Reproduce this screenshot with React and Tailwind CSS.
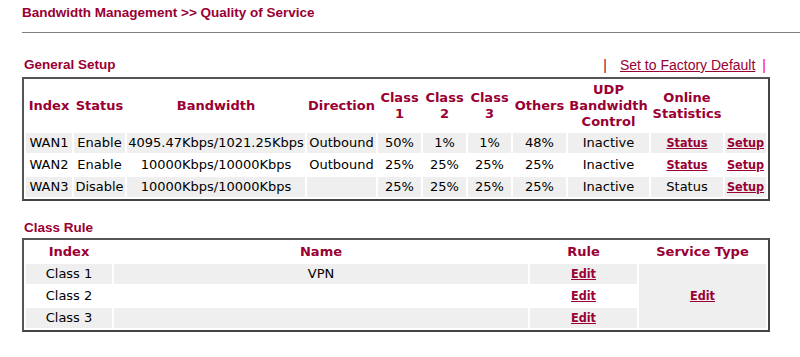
const wanRows = [
  { idx: "WAN1", status: "Enable", bw: "4095.47Kbps/1021.25Kbps", dir: "Outbound", c1: "50%", c2: "1%", c3: "1%", others: "48%", udp: "Inactive", link: true },
  { idx: "WAN2", status: "Enable", bw: "10000Kbps/10000Kbps", dir: "Outbound", c1: "25%", c2: "25%", c3: "25%", others: "25%", udp: "Inactive", link: true },
  { idx: "WAN3", status: "Disable", bw: "10000Kbps/10000Kbps", dir: "", c1: "25%", c2: "25%", c3: "25%", others: "25%", udp: "Inactive", link: false },
];

const classRows = [
  { idx: "Class 1", name: "VPN" },
  { idx: "Class 2", name: "" },
  { idx: "Class 3", name: "" },
];

function Head({ children }) {
  return (
    <div className="h-[50px] flex items-center justify-center text-center font-bold leading-[16px] text-[#990033]">
      {children}
    </div>
  );
}

function Cell({ gray, children }) {
  return (
    <div className={`h-[20px] flex items-center justify-center leading-[20px] whitespace-nowrap ${gray ? "bg-[#efefef]" : ""}`}>
      {children}
    </div>
  );
}

// links use a narrower bold face than the headers
function Lnk({ children }) {
  return (
    <a href="#" className="font-bold underline text-[#990033] text-[12.5px] font-['DejaVu_Sans_Condensed','Liberation_Sans',sans-serif]">
      {children}
    </a>
  );
}

export default function App() {
  return (
    <div className="w-[800px] h-[357px] bg-white overflow-hidden font-['Liberation_Sans',Arial,sans-serif]">
      <div className="pl-[22px]">
        {/* page title */}
        <h1 className="pt-[5px] text-[13.5px] font-bold leading-[16px] text-[#990033]">
          Bandwidth Management &gt;&gt; Quality of Service
        </h1>
        <div className="mt-[11px] h-[1px] bg-[#808080]" />

        {/* general setup */}
        <div className="w-[748px] mt-[24px] flex items-end justify-between leading-[16px]">
          <span className="pl-[2px] text-[13.5px] font-bold text-[#990033]">General Setup</span>
          <span className="flex items-center pr-[4px] text-[14px]">
            <span className="text-[#990033]">|</span>
            <a href="#" className="ml-[13px] mr-[7px] underline text-[#990033]">Set to Factory Default</a>
            <span className="text-[#ff0066]">|</span>
          </span>
        </div>
        <div className="mt-[4px] w-[748px] border-2 border-t-[#555] border-l-[#555] border-r-[#444] border-b-[#444] p-[2px] grid grid-cols-[46px_51px_178px_69px_43px_43px_43px_53px_81px_72px_41px] gap-[2px] text-[13px] text-black font-['DejaVu_Sans',Verdana,sans-serif]">
          <Head>Index</Head>
          <Head>Status</Head>
          <Head>Bandwidth</Head>
          <Head>Direction</Head>
          <Head>Class<br />1</Head>
          <Head>Class<br />2</Head>
          <Head>Class<br />3</Head>
          <Head>Others</Head>
          <Head>UDP<br />Bandwidth<br />Control</Head>
          <Head>Online<br />Statistics</Head>
          <Head></Head>
          {wanRows.map((r, i) => {
            const g = i !== 1;
            return [
              <Cell key={r.idx + "a"} gray={g}>{r.idx}</Cell>,
              <Cell key={r.idx + "b"} gray={g}>{r.status}</Cell>,
              <Cell key={r.idx + "c"} gray={g}>{r.bw}</Cell>,
              <Cell key={r.idx + "d"} gray={g}>{r.dir}</Cell>,
              <Cell key={r.idx + "e"} gray={g}>{r.c1}</Cell>,
              <Cell key={r.idx + "f"} gray={g}>{r.c2}</Cell>,
              <Cell key={r.idx + "g"} gray={g}>{r.c3}</Cell>,
              <Cell key={r.idx + "h"} gray={g}>{r.others}</Cell>,
              <Cell key={r.idx + "i"} gray={g}>{r.udp}</Cell>,
              <Cell key={r.idx + "j"} gray={g}>{r.link ? <Lnk>Status</Lnk> : "Status"}</Cell>,
              <Cell key={r.idx + "k"} gray={g}><Lnk>Setup</Lnk></Cell>,
            ];
          })}
        </div>

        {/* class rule */}
        <div className="mt-[19px] pl-[2px] text-[13.5px] leading-[16px] font-bold text-[#990033]">Class Rule</div>
        <div className="mt-[2px] w-[748px] border-2 border-t-[#555] border-l-[#555] border-r-[#444] border-b-[#444] p-[2px] grid grid-cols-[86px_414px_107px_127px] gap-[2px] text-[13px] text-black font-['DejaVu_Sans',Verdana,sans-serif]">
          {["Index", "Name", "Rule", "Service Type"].map((h) => (
            <div key={h} className="h-[20px] flex items-center justify-center font-bold text-[#990033]">{h}</div>
          ))}
          {classRows.map((r, i) => {
            const g = i !== 1;
            return [
              <Cell key={r.idx + "a"} gray={g}>{r.idx}</Cell>,
              <Cell key={r.idx + "b"} gray={g}>{r.name}</Cell>,
              <Cell key={r.idx + "c"} gray={g}><Lnk>Edit</Lnk></Cell>,
              i === 0 ? (
                <div key="svc" className="row-span-3 bg-[#efefef] flex items-center justify-center">
                  <Lnk>Edit</Lnk>
                </div>
              ) : null,
            ];
          })}
        </div>
      </div>
    </div>
  );
}
